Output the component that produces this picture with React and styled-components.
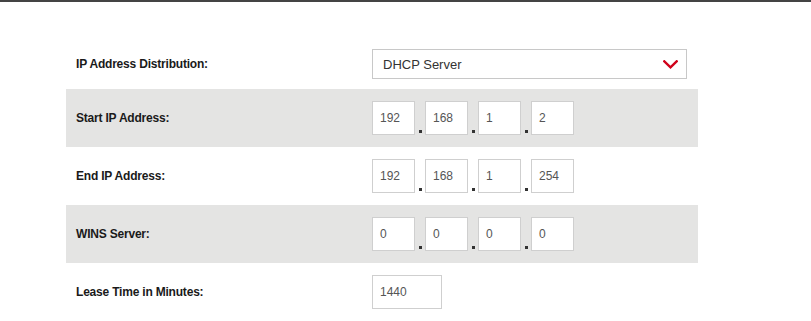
import styled, { createGlobalStyle } from "styled-components";

const GlobalStyle = createGlobalStyle`
    body {
        margin: 0;
        background: #ffffff;
        font-family: "Liberation Sans", Arial, sans-serif;
    }
`;

const fields = [
    { label: "Start IP Address:", value: ["192", "168", "1", "2"] },
    { label: "End IP Address:", value: ["192", "168", "1", "254"] },
    { label: "WINS Server:", value: ["0", "0", "0", "0"] },
];

function Chevron() {
    return (
        <svg width="15" height="9" viewBox="0 0 15 9" fill="none">
            <path d="M1.3 1.3 L7.5 7.3 L13.7 1.3" stroke="#d0021b" strokeWidth="2.4" strokeLinecap="square" />
        </svg>
    );
}

function IpInput({ value }) {
    return (
        <IpGroup>
            {value.map((part, i) => (
                <Octet key={i}>
                    {i > 0 && <Dot />}
                    <Box>{part}</Box>
                </Octet>
            ))}
        </IpGroup>
    );
}

export default function App() {
    return (
        <>
            <GlobalStyle />
            <Page>
                <Form>
                    <Row first>
                        <Label>IP Address Distribution:</Label>
                        <Select>
                            <span>DHCP Server</span>
                            <Chevron />
                        </Select>
                    </Row>
                    {fields.map((f, i) => (
                        <Row key={f.label} shaded={i % 2 === 0}>
                            <Label>{f.label}</Label>
                            <IpInput value={f.value} />
                        </Row>
                    ))}
                    <Row>
                        <Label>Lease Time in Minutes:</Label>
                        <Box wide>1440</Box>
                    </Row>
                </Form>
            </Page>
        </>
    );
}

const Page = styled.div`
    width: 811px;
    height: 321px;
    overflow: hidden;
    border-top: 2px solid #444444;
    box-sizing: border-box;
    padding: 29px 0 0 66px;
`;

const Form = styled.div`
    width: 632px;
    display: flex;
    flex-direction: column;
`;

const Row = styled.div`
    display: grid;
    grid-template-columns: 306px 1fr;
    align-items: center;
    box-sizing: border-box;
    height: 58px;
    padding-top: ${props => props.first ? "8px" : "0"};
    background-color: ${props => props.shaded ? "#e4e4e3" : "transparent"};
`;

const Label = styled.span`
    padding-left: 10px;
    font-size: 12px;
    font-weight: bold;
    color: #1a1a1a;
    letter-spacing: -0.2px;
`;

const Select = styled.div`
    width: 315px;
    height: 30px;
    box-sizing: border-box;
    border: 1px solid #c8c8c8;
    background: #ffffff;
    display: flex;
    align-items: center;
    justify-content: space-between;
    padding: 0 8px 0 10px;
    font-size: 13px;
    color: #333333;
`;

const IpGroup = styled.div`
    display: flex;
    align-items: flex-end;
`;

const Octet = styled.div`
    display: flex;
    align-items: flex-end;
`;

const Dot = styled.span`
    width: 3px;
    height: 3px;
    margin: 0 3px 2px 4px;
    background: #333333;
`;

const Box = styled.div`
    width: ${props => props.wide ? "70px" : "43px"};
    height: 34px;
    box-sizing: border-box;
    border: 1px solid #cfcfcf;
    background: #ffffff;
    display: flex;
    align-items: center;
    padding-left: 7px;
    font-size: 12px;
    color: #555555;
`;
